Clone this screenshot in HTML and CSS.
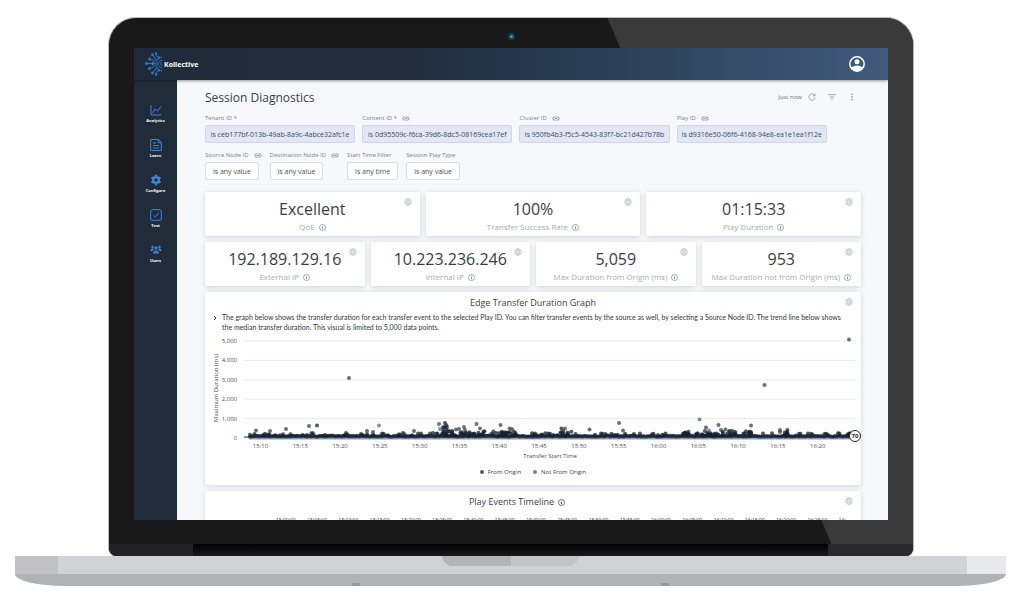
FILE: index.html
```html
<!DOCTYPE html>
<html lang="en">
<head>
	<meta charset="UTF-8">
	<meta name="viewport" content="width=device-width, initial-scale=1">
	<title>Session Diagnostics</title>
	<link rel="stylesheet" href="styles.css">
	<script src="chart.js" defer></script>
</head>
<body>
<svg class="defs" width="0" height="0" aria-hidden="true">
	<symbol id="i-globe" viewBox="0 0 16 16"><g fill="none" stroke="currentColor" stroke-width="1.300"><circle cx="8" cy="8" r="7"/><ellipse cx="8" cy="8" rx="3.500" ry="7"/><path d="M8 1v14M1 8h14M2 4.500h12M2 11.500h12"/></g></symbol>
	<symbol id="i-info" viewBox="0 0 16 16"><circle cx="8" cy="8" r="7" fill="none" stroke="currentColor" stroke-width="1.600"/><path d="M7 3.800h2v2H7zM7 7h2v5.200H7z" fill="currentColor"/></symbol>
	<symbol id="i-link" viewBox="0 0 20 12"><g fill="none" stroke="currentColor" stroke-width="2"><path d="M9 2H6a4 4 0 0 0 0 8h3M11 2h3a4 4 0 0 1 0 8h-3M6.500 6h7"/></g></symbol>
</svg>
<div class="laptop">
	<div class="lid">
		<i class="camera"></i>
		<div class="screen">
			<header class="topbar">
				<a class="logo" href="#">
					<svg width="18" height="24" viewBox="0 0 18 24" fill="none" stroke="#2f78c8" stroke-width="1">
						<path d="M2 11.500h8M5 7l5 2M5 16.500l5-2.500M8 3l2 4 3 1M8 21l2-4 3-1M11 1l1 4 3 1M11 23l1-4 3-1"/>
						<path d="M17 5c-5 1-6 4-6 7s1 6 6 7M17 8c-3 1-4 2-4 4s1 3 4 4M17 10.500c-2 0-2 3 0 3M14 4v3M14 17v3"/>
						<g fill="#2f78c8" stroke="none"><circle cx="1.500" cy="11.500" r="1.500"/><circle cx="4.500" cy="7" r="1.500"/><circle cx="4.500" cy="16.500" r="1.500"/><circle cx="7.500" cy="2.800" r="1.400"/><circle cx="7.500" cy="21" r="1.400"/><circle cx="11" cy="1.500" r="1.200"/><circle cx="11" cy="22.500" r="1.200"/><circle cx="8" cy="11.500" r="1.700"/></g>
					</svg>
					<span>Kollective</span>
				</a>
				<button class="user" aria-label="Account">
					<svg width="16" height="16" viewBox="0 0 16 16"><circle cx="8" cy="8" r="7.200" fill="none" stroke="#fff" stroke-width="1.500"/><circle cx="8" cy="5.700" r="2.500" fill="#fff"/><path d="M2.200 11.500Q8 7.500 13.800 11.500Q12 15 8 15T2.200 11.500z" fill="#fff"/></svg>
				</button>
			</header>
			<nav class="side">
				<a href="#"><svg viewBox="0 0 12 12"><path d="M1 1v10h10.500M2.500 9l2.500-4 2.500 2L11 2.500"/></svg>Analytics</a>
				<a href="#"><svg viewBox="0 0 12 12"><path d="M.7.500h7.800l2.800 3v8H.7zM8.300.700v3h3M3 4h3M3 6.500h6M3 9h6"/></svg>Learn</a>
				<a href="#"><svg viewBox="0 0 12 12"><circle cx="6" cy="6" r="2.900" stroke-width="2.200"/><path stroke-width="2.400" d="M6 .8v1.500M6 9.700v1.500M1.500 3.400l1.300.800M9.200 7.800l1.300.800M1.500 8.600l1.300-.800M9.200 4.200l1.300-.800"/></svg>Configure</a>
				<a href="#"><svg viewBox="0 0 12 12"><rect x=".7" y=".7" width="10.600" height="10.600" rx="1"/><path d="M3.500 6.200l1.800 1.700 3.200-3.700"/></svg>Test</a>
				<a href="#"><svg viewBox="0 0 12 12"><g fill="#3f86d8" stroke="none"><circle cx="6" cy="4" r="1.700"/><circle cx="2.500" cy="3" r="1.200"/><circle cx="9.500" cy="3" r="1.200"/><path d="M3 9.500c0-4 6-4 6 0zM.5 7c0-3 3-3 3.500-1.800L2.600 7zM11.500 7c0-3-3-3-3.500-1.800L9.400 7z"/></g></svg>Users</a>
			</nav>
			<main class="main">
				<div class="head">
					<h1>Session Diagnostics</h1>
					<div class="tools">
						<span>Just now</span>
						<button aria-label="Reload"><svg viewBox="0 0 12 12"><path d="M10 3.500A4.700 4.700 0 1 0 10.700 7M10.500 1v3.200H7.300"/></svg></button>
						<button aria-label="Filters"><svg viewBox="0 0 12 12"><path d="M0 2.500h12M2.500 6h7M4.500 9.500h3"/></svg></button>
						<button aria-label="More"><svg viewBox="0 0 12 12"><path stroke-width="2" d="M6 1v2M6 5v2M6 9v2"/></svg></button>
					</div>
				</div>

				<div class="filters ids">
					<div class="filter"><label for="tenant">Tenant ID *</label><button id="tenant">is ceb177bf-013b-49ab-8a9c-4abce32afc1e</button></div>
					<div class="filter"><label for="content">Content ID * <svg class="link"><use href="#i-link"/></svg></label><button id="content">is 0d95509c-f6ca-39d6-8dc5-08169cea17ef</button></div>
					<div class="filter"><label for="cluster">Cluster ID <svg class="link"><use href="#i-link"/></svg></label><button id="cluster">is 950fb4b3-f5c5-4543-83f7-bc21d427b78b</button></div>
					<div class="filter"><label for="play">Play ID <svg class="link"><use href="#i-link"/></svg></label><button id="play">is d9316e50-06f6-4168-94e8-ea1e1ea1f12e</button></div>
				</div>
				<div class="filters">
					<div class="filter"><label for="source">Source Node ID <svg class="link"><use href="#i-link"/></svg></label><button id="source">is any value</button></div>
					<div class="filter"><label for="dest">Destination Node ID <svg class="link"><use href="#i-link"/></svg></label><button id="dest">is any value</button></div>
					<div class="filter"><label for="start">Start Time Filter</label><button id="start">is any time</button></div>
					<div class="filter"><label for="type">Session Play Type</label><button id="type">is any value</button></div>
				</div>

				<div class="cards">
					<div class="row">
						<section class="card stat"><svg class="globe"><use href="#i-globe"/></svg><b>Excellent</b><p>QoE <svg class="info"><use href="#i-info"/></svg></p></section>
						<section class="card stat"><svg class="globe"><use href="#i-globe"/></svg><b>100%</b><p>Transfer Success Rate <svg class="info"><use href="#i-info"/></svg></p></section>
						<section class="card stat"><svg class="globe"><use href="#i-globe"/></svg><b>01:15:33</b><p>Play Duration <svg class="info"><use href="#i-info"/></svg></p></section>
					</div>
					<div class="row">
						<section class="card stat"><svg class="globe"><use href="#i-globe"/></svg><b>192.189.129.16</b><p>External IP <svg class="info"><use href="#i-info"/></svg></p></section>
						<section class="card stat"><svg class="globe"><use href="#i-globe"/></svg><b>10.223.236.246</b><p>Internal IP <svg class="info"><use href="#i-info"/></svg></p></section>
						<section class="card stat"><svg class="globe"><use href="#i-globe"/></svg><b>5,059</b><p>Max Duration from Origin (ms) <svg class="info"><use href="#i-info"/></svg></p></section>
						<section class="card stat"><svg class="globe"><use href="#i-globe"/></svg><b>953</b><p>Max Duration not from Origin (ms) <svg class="info"><use href="#i-info"/></svg></p></section>
					</div>
					<section class="card graph">
						<svg class="globe"><use href="#i-globe"/></svg>
						<h2>Edge Transfer Duration Graph</h2>
						<div class="note">
							<svg viewBox="0 0 6 6"><path d="M2 1l2 2-2 2" fill="none" stroke="#333"/></svg>
							<p>The graph below shows the transfer duration for each transfer event to the selected Play ID. You can filter transfer events by the source as well, by selecting a Source Node ID. The trend line below shows the median transfer duration. This visual is limited to 5,000 data points.</p>
						</div>
						<svg class="chart" id="chart" viewBox="0 0 656 126"></svg>
						<ul class="legend">
							<li>From Origin</li>
							<li class="not">Not From Origin</li>
						</ul>
					</section>
					<section class="card timeline">
						<svg class="globe"><use href="#i-globe"/></svg>
						<h2>Play Events Timeline <svg class="info"><use href="#i-info"/></svg></h2>
						<div class="times"><span>15:00:00</span><span>15:05:00</span><span>15:10:00</span><span>15:15:00</span><span>15:20:00</span><span>15:25:00</span><span>15:30:00</span><span>15:35:00</span><span>15:40:00</span><span>15:45:00</span><span>15:50:00</span><span>15:55:00</span><span>16:00:00</span><span>16:05:00</span><span>16:10:00</span><span>16:15:00</span><span>16:20:00</span><span>16:25:00</span><span>16:</span></div>
					</section>
				</div>
			</main>
		</div>
		<div class="hinge"></div>
	</div>
	<div class="base">
		<div class="deck"><div class="notch"></div></div>
		<div class="under"><i></i><i></i></div>
	</div>
</div>
</body>
</html>
```
FILE: styles.css
```css
*{box-sizing:border-box; margin:0; padding:0;}
body{background:#fff; font-family:"Open Sans","Noto Sans",sans-serif; color:#3a3f45;}
button{font-family:inherit; border:0; background:none; cursor:pointer;}
a{text-decoration:none; color:inherit;}
.defs{position:absolute;}

/* laptop */
.laptop{padding:17px 18px 18px 15px;}
.lid{position:relative; margin:0 92px 0 93px; padding:30px 25px 0 25px; background:#191919; border:1px solid #b9b9b9; border-bottom:0; border-radius:28px 28px 8px 8px; overflow:hidden;}
.lid:before{content:""; position:absolute; left:0; top:0; right:0; bottom:0; background:#3a3a3a; clip-path:polygon(62% 0,100% 0,100% 100%,90.500% 100%);}
.camera{position:absolute; left:50%; top:15px; width:7px; height:7px; margin-left:-3px; border-radius:50%; background:#2aa6c4; border:2px solid #12404f;}
.screen{position:relative; aspect-ratio:754/472; overflow:hidden; display:grid; grid-template:32px 1fr / 43px 1fr; background:#f6f8fb;}
.hinge{position:relative; height:36px; margin:0 -25px; background:linear-gradient(#000,#191919) 50% 100% / 79% 12px no-repeat, linear-gradient(90deg,#222 50%,#292929 50%) 0 100% / 100% 12px no-repeat;}
.deck{height:18px; background:linear-gradient(90deg,#c1c1c3 43px,#d1d2d3 43px,#d1d2d3 calc(100% - 39px),#e6eaed calc(100% - 39px));}
.notch{width:138px; height:10px; margin:0 auto; background:linear-gradient(90deg,#b4b4b5 50%,#c4c4c5 50%); clip-path:polygon(0 0,100% 0,98% 60%,94% 100%,6% 100%,2% 60%);}
.under{height:12px; display:flex; justify-content:space-between; align-items:flex-end; padding:0 337px; background:#b1b2b4; border-radius:0 0 50px 50px / 0 0 12px 12px;}
.under i{width:8px; height:3px; background:#98999a;}

/* app bars */
.topbar{grid-column:1 / 3; display:flex; justify-content:space-between; align-items:center; padding:0 23px 0 11px; background:linear-gradient(90deg,#202b39 0,#202c3b 35%,#2c4059 65%,#415a7c 100%); box-shadow:0 1px 3px rgba(0,0,0,.4); z-index:1;}
.logo{display:flex; align-items:center; gap:1px; color:#fff; font-size:7px; font-weight:700;}
.user{width:16px; height:16px;}
.user svg{display:block;}
.side{display:flex; flex-direction:column; gap:15px; padding-top:24px; background:#202c39;}
.side a{display:flex; flex-direction:column; align-items:center; gap:2px; color:#fff; font-size:4px; line-height:6px; font-weight:700;}
.side svg{width:12px; height:12px; fill:none; stroke:#3f86d8;}

.main{min-width:0; overflow:hidden; padding:7px 27px 0 28px;}
.head{display:flex; justify-content:space-between; align-items:center; height:20px; margin-bottom:7px;}
.head h1{font-size:12px; font-weight:400;}
.tools{display:flex; align-items:center; gap:12px; padding-right:5px; font-size:6px; color:#6b7077;}
.tools span{margin-right:-6px;}
.tools button,.tools svg{display:block; width:8px; height:8px;}
.tools svg{fill:none; stroke:#7d8288;}

.filters{display:flex; gap:8px; margin-bottom:8px;}
.filters.ids{display:grid; grid-template-columns:repeat(4,minmax(0,150fr)) minmax(0,27fr); gap:7px;}
.filter label{display:flex; gap:5px; align-items:center; height:8px; margin-bottom:3px; font-size:6px; color:#7a7f86; white-space:nowrap;}
.filter button{display:block; height:18px; padding:0 7px; border:1px solid #d9dce0; border-radius:2px; background:#fff; font-size:7px; color:#4a4f57; white-space:nowrap;}
.filters.ids button{width:100%; padding:0; background:#e1e7f5; border-color:#cdd5e4; color:#3f4858;}
.link{width:8px; height:5px;}

/* tiles */
.cards{display:flex; flex-direction:column; gap:6px; padding-top:4px;}
.row{display:grid; grid-auto-flow:column; grid-auto-columns:1fr; gap:6px;}
.card{position:relative; background:#fff; border-radius:2px; box-shadow:0 1px 5px rgba(0,0,0,.16);}
.globe{position:absolute; right:8px; top:6px; width:8px; height:8px; color:#c4c6c8;}
.info{width:7px; height:7px; flex:none;}
.stat{padding:6px 0 4px; text-align:center;}
.stat b{display:block; font-size:16px; line-height:22px; font-weight:400; color:#3a3d40;}
.stat p{display:flex; justify-content:center; align-items:center; gap:4px; margin-top:2px; font-size:8px; line-height:10px; color:#a9acaf; white-space:nowrap;}
.stat .info{color:#85898c;}
.card h2{display:flex; justify-content:center; align-items:center; gap:4px; font-size:9px; line-height:12px; font-weight:400;}
.graph{padding-top:5px;}
.note{display:flex; gap:4px; padding:3px 14px 0 7px; font-family:Lato,"Open Sans",sans-serif; font-size:7px; line-height:10px; color:#33373b;}
.note svg{flex:none; width:6px; height:6px; margin-top:3px;}
.chart{display:block; width:100%; margin-top:3px; font-size:6px; fill:#4a4e52;}
.legend{display:flex; justify-content:center; gap:12px; padding:6px 0 8px; list-style:none; font-size:6px; line-height:10px;}
.legend li{display:flex; align-items:center; gap:4px;}
.legend li:before{content:""; width:4px; height:4px; border-radius:50%; background:#55585d;}
.legend .not:before{background:#7c8087;}
.timeline{padding-top:5px; height:80px;}
.timeline h2{padding-right:32px;}
.times{display:flex; justify-content:space-between; padding:7px 15px 0 71px; font-size:5px; line-height:10px;}

/* chart */
.grid{stroke:#e9ebed;}
.trend{stroke:#46648f; stroke-width:2; fill:none;}
.dot{fill:#17222f; fill-opacity:.75;}
.dot.grey{fill:#3c4046; fill-opacity:.75;}
.dot.blue{fill:#5c6684; fill-opacity:.75;}
.end{fill:#fff; stroke:#222;}
.endtext{font-weight:700; fill:#222;}
```
FILE: chart.js
```js
var chart=document.getElementById('chart');
var base=103;	// y of 0 ms
var out='';

// y axis
for(var i=0;i<=5;i++){
	var y=base-i*19.4;
	out+='<line class="grid" x1="39" x2="651" y1="'+y+'" y2="'+y+'"/>';
	out+='<text x="32" y="'+(y+2)+'" text-anchor="end">'+(i?i+',000':'0')+'</text>';
}
out+='<text transform="translate(13 53) rotate(-90)" text-anchor="middle">Maximum Duration (ms)</text>';

// x axis, one label every 5 minutes from 15:10
for(var i=0;i<15;i++){
	var m=10+i*5;
	var t=(15+Math.floor(m/60))+':'+('0'+m%60).slice(-2);
	out+='<text x="'+(55.5+i*39.8)+'" y="113" text-anchor="middle">'+t+'</text>';
}

out+='<line x1="39" x2="651" y1="102" y2="102" stroke="#222"/>';

function dot(x,y,cls){
	out+='<circle class="dot '+(cls||'')+'" cx="'+x+'" cy="'+y+'" r="2"/>';
}

// low values
var seed=7;
function rnd(){
	seed=(seed*16807)%2147483647;
	return seed/2147483647;
}
for(var x=45;x<645;x+=1.5){
	dot(x.toFixed(1),(101.8-rnd()*1.2).toFixed(1));
	if(rnd()>0.75) dot(x.toFixed(1),(100.4-rnd()*2.4).toFixed(1));
}
out+='<path class="trend" stroke-opacity=".6" d="M44 103.500H645"/>';

// busy spots: x, spread, top
var busy=[[240,2,90],[243,5,96],[260,6,97],[274,6,96],[295,8,96],[306,6,96],[361,6,96],[500,8,96],[508,6,96],[525,8,96],[541,5,96],[481,3,96],[582,3,95],[645,3,98]];
for(var i=0;i<busy.length;i++){
	for(var j=0;j<10;j++){
		dot(busy[i][0]+(rnd()-0.5)*busy[i][1]*2,busy[i][2]+rnd()*(101-busy[i][2]));
	}
}

// single values
var pts=[[144,43,'grey'],[559.5,50,'grey'],[644,4.5,'grey'],[51,95.5,'grey'],[65,96,'grey'],[81,94,'grey'],[104,91,'grey'],[112,90.5],[174,90.5,'blue'],[162,96,'grey'],[168,97,'grey'],[209,96,'grey'],[234,89,'grey'],[235,94,'blue'],[240,88],[251,94.5,'grey'],[254,94,'grey'],[259,92,'grey'],[260,95,'grey'],[271.5,89,'grey'],[275,93.5,'grey'],[295.5,90,'grey'],[304.5,93.5,'grey'],[307,94,'grey'],[356.5,93.5],[360,93.5,'grey'],[384.5,94.5,'grey'],[414,88,'grey'],[418,95.5,'grey'],[494.5,84.5,'blue'],[501,92.5,'grey'],[504,95.5,'blue'],[513.5,90,'grey'],[516,95,'grey'],[520.5,94.5,'grey'],[526,96,'grey'],[546,90.5,'grey'],[575,95,'grey'],[575,97,'grey']];
for(var i=0;i<pts.length;i++) dot(pts[i][0],pts[i][1],pts[i][2]);

out+='<circle class="end" cx="650" cy="101" r="5.500"/><text class="endtext" x="650" y="103" text-anchor="middle">70</text>';
out+='<text x="345" y="123" text-anchor="middle">Transfer Start Time</text>';
chart.innerHTML=out;
```
